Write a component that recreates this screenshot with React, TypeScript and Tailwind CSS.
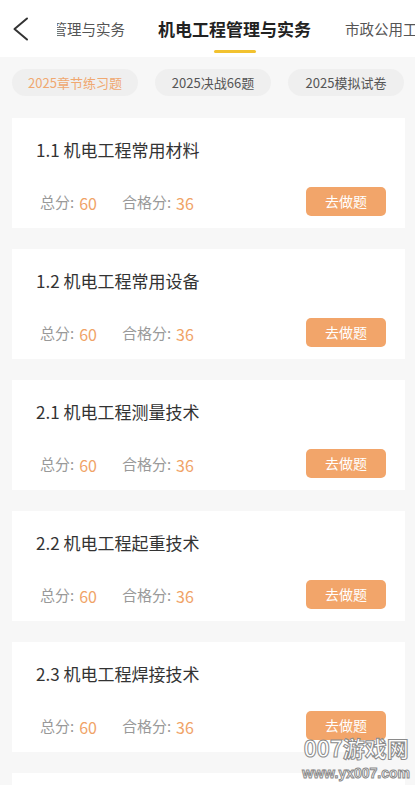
const chapters = [
  "1.1 机电工程常用材料",
  "1.2 机电工程常用设备",
  "2.1 机电工程测量技术",
  "2.2 机电工程起重技术",
  "2.3 机电工程焊接技术",
  "2.4 机电工程安装技术",
];

const pills = ["2025章节练习题", "2025决战66题", "2025模拟试卷"];

export default function App() {
  return (
    <div className="relative h-[785px] w-[415px] overflow-hidden bg-[#f7f7f7] font-['Noto_Sans_CJK_SC',sans-serif]">
      {/* header tabs */}
      <div className="flex h-[57px] items-start bg-white">
        <div className="flex h-[57px] w-[57px] shrink-0 items-start pl-[13px] pt-[17px]">
          <svg width="16" height="24" viewBox="0 0 16 24" fill="none">
            <polyline points="14,1.5 1.5,12 14,22.5" stroke="#333" strokeWidth="2" strokeLinecap="round" strokeLinejoin="round" />
          </svg>
        </div>
        <div className="flex flex-1 items-start overflow-hidden whitespace-nowrap pt-[17px]">
          <div className="flex w-[68px] shrink-0 justify-end overflow-hidden">
            <span className="shrink-0 text-[14.5px] leading-[24px] text-[#555]">管理与实务</span>
          </div>
          <div className="ml-[33px] flex shrink-0 flex-col items-center">
            <span className="text-[17px] font-bold leading-[24px] text-[#222]">机电工程管理与实务</span>
            <span className="mt-[9px] h-[3px] w-[42px] rounded-full bg-[#f2c230]" />
          </div>
          <span className="ml-[34px] shrink-0 text-[14.5px] leading-[24px] text-[#555]">市政公用工程</span>
        </div>
      </div>

      {/* filter pills */}
      <div className="flex gap-[17px] px-[12px] pt-[12px]">
        {pills.map((p, i) => (
          <div
            key={p}
            className={`flex h-[27px] shrink-0 items-center justify-center whitespace-nowrap rounded-full bg-[#efefef] text-[13px] ${
              i === 0 ? "w-[126px] text-[#f0a870]" : "w-[116px] text-[#555]"
            }`}
          >
            {p}
          </div>
        ))}
      </div>

      {/* chapter list */}
      <div className="flex flex-col gap-[21px] pl-[12px] pr-[10px] pt-[22px]">
        {chapters.map((c) => (
          <div key={c} className="flex h-[110px] shrink-0 flex-col bg-white pl-[24px] pr-[19px] pt-[20px]">
            <div className="text-[17px] leading-[24px] text-[#333]">{c}</div>
            <div className="mt-[25px] flex items-center justify-between">
              <div className="flex items-center pl-[4px] pt-[2px] text-[15px] text-[#999]">
                <span>总分:</span>
                <span className="ml-[5px] text-[16px] text-[#f0a366]">60</span>
                <span className="ml-[25px]">合格分:</span>
                <span className="ml-[5px] text-[16px] text-[#f0a366]">36</span>
              </div>
              <button className="flex h-[29px] w-[80px] items-center justify-center rounded-[5px] bg-[#f2a56a] text-[14px] text-white">
                去做题
              </button>
            </div>
          </div>
        ))}
      </div>

      {/* watermark */}
      <div className="pointer-events-none absolute bottom-[5px] right-[5px] flex flex-col items-center leading-none text-white [-webkit-text-stroke:1px_#8a8a8a]">
        <span className="text-[22px] font-bold">007游戏网</span>
        <span className="mt-[8px] font-['Liberation_Sans',sans-serif] text-[14px] font-bold">www.yx007.com</span>
      </div>
    </div>
  );
}
